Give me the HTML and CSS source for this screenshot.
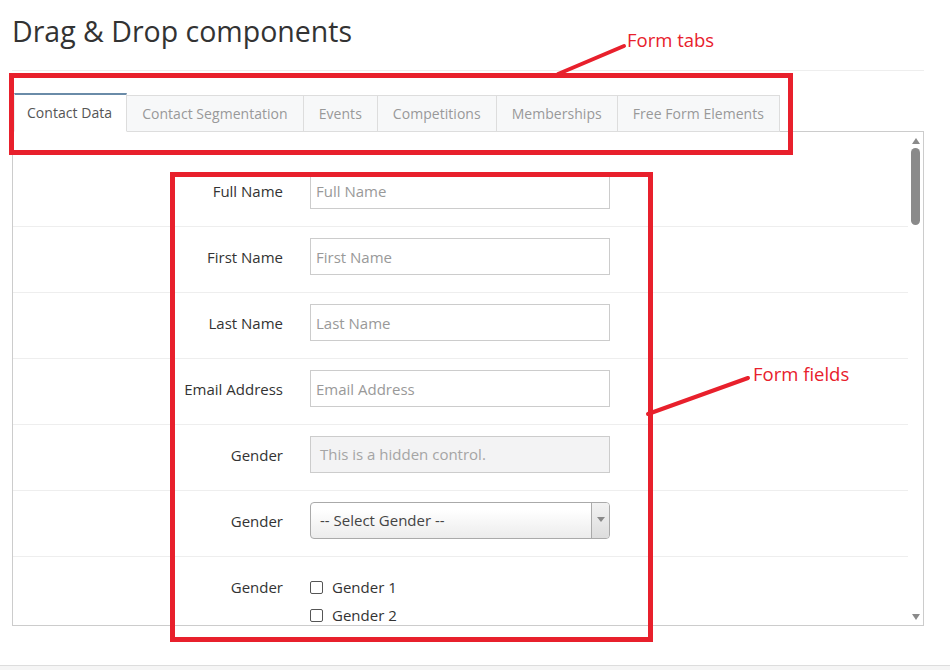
FILE: index.html
```html
<!DOCTYPE html>
<html lang="en">
<head>
<meta charset="utf-8">
<title>Drag &amp; Drop components</title>
<link rel="stylesheet" href="styles.css">
</head>
<body>
<div class="page">
  <div class="header">
    <h1 class="title">Drag &amp; Drop components</h1>
  </div>
  <div class="tabs">
    <div class="tab active">Contact Data</div>
    <div class="tab">Contact Segmentation</div>
    <div class="tab">Events</div>
    <div class="tab">Competitions</div>
    <div class="tab">Memberships</div>
    <div class="tab">Free Form Elements</div>
  </div>
  <div class="panel">
    <div class="rows">
      <div class="row">
        <div class="lbl">Full Name</div>
        <div class="ctl"><input class="inp" type="text" placeholder="Full Name"></div>
      </div>
      <div class="row">
        <div class="lbl">First Name</div>
        <div class="ctl"><input class="inp" type="text" placeholder="First Name"></div>
      </div>
      <div class="row">
        <div class="lbl">Last Name</div>
        <div class="ctl"><input class="inp" type="text" placeholder="Last Name"></div>
      </div>
      <div class="row">
        <div class="lbl">Email Address</div>
        <div class="ctl"><input class="inp" type="text" placeholder="Email Address"></div>
      </div>
      <div class="row">
        <div class="lbl">Gender</div>
        <div class="ctl"><div class="hidden-ctl">This is a hidden control.</div></div>
      </div>
      <div class="row">
        <div class="lbl">Gender</div>
        <div class="ctl">
          <div class="select">
            <span class="select-text">-- Select Gender --</span>
            <span class="select-arrow"><span class="tri-down"></span></span>
          </div>
        </div>
      </div>
      <div class="row row-checks">
        <div class="lbl lbl-top">Gender</div>
        <div class="ctl checks">
          <div class="check"><span class="box"></span>Gender 1</div>
          <div class="check"><span class="box"></span>Gender 2</div>
        </div>
      </div>
    </div>
    <div class="scrollbar">
      <span class="sb-up"></span>
      <span class="sb-thumb"></span>
      <span class="sb-space"></span>
      <span class="sb-down"></span>
    </div>
  </div>
</div>
<div class="footer"></div>

<svg class="annot" width="950" height="670" viewBox="0 0 950 670" aria-hidden="true">
  <rect x="11.5" y="75.5" width="779" height="77" fill="none" stroke="#e8202c" stroke-width="5"/>
  <rect x="172.5" y="174.5" width="478" height="465" fill="none" stroke="#e8202c" stroke-width="5"/>
  <line x1="558" y1="74" x2="624" y2="46" stroke="#e8202c" stroke-width="4" stroke-linecap="round"/>
  <line x1="648" y1="414" x2="748" y2="378" stroke="#e8202c" stroke-width="4" stroke-linecap="round"/>
</svg>
<div class="note note-tabs">Form tabs</div>
<div class="note note-fields">Form fields</div>
</body>
</html>
```
FILE: styles.css
```css
* { box-sizing: border-box; }
html, body { margin: 0; padding: 0; background: #fff; }
body {
  font-family: "Open Sans", "Noto Sans", "Liberation Sans", sans-serif;
  color: #333;
  font-size: 15px;
  width: 950px;
  height: 670px;
  overflow: hidden;
  position: relative;
}
.page {
  margin-left: 12px;
  width: 912px;
}
.header {
  padding-top: 11px;
  padding-bottom: 19px;
  border-bottom: 1px solid #eee;
}
.title {
  margin: 0;
  font-size: 28.5px;
  line-height: 40px;
  font-weight: 400;
  color: #333;
}
.tabs {
  display: flex;
  align-items: flex-end;
  margin-top: 22px;
  padding-left: 2px;
  position: relative;
  z-index: 1;
  margin-bottom: -1px;
}
.tab {
  height: 37px;
  line-height: 35px;
  padding: 0 15px;
  background: #f7f8f9;
  border: 1px solid #ddd;
  border-left: none;
  color: #999;
  font-size: 14px;
  letter-spacing: 0.04px;
  white-space: nowrap;
}
.tab.active {
  height: 39px;
  line-height: 36px;
  background: #fff;
  color: #555;
  border-top: 2px solid #6a8ba8;
  border-left: 1px solid #eee;
  border-right: 1px solid #ddd;
  border-bottom: 1px solid #fff;
  padding: 0 14px 0 12px;
}
.panel {
  display: flex;
  height: 495px;
  border: 1px solid #ccc;
  overflow: hidden;
}
.rows {
  flex: 1;
  padding-top: 29px;
  overflow: hidden;
}
.row {
  display: flex;
  align-items: center;
  height: 66px;
  padding-top: 11px;
  padding-bottom: 17px;
  border-bottom: 1px solid #eee;
}
.lbl {
  width: 270px;
  text-align: right;
  color: #333;
  font-size: 15px;
  flex: none;
}
.ctl {
  margin-left: 27px;
  width: 300px;
  flex: none;
}
.inp {
  display: block;
  width: 300px;
  height: 37px;
  border: 1px solid #ccc;
  padding: 0 5px;
  font: inherit;
  font-size: 15px;
  color: #333;
  background: #fff;
  outline: none;
}
.inp::placeholder { color: #999; opacity: 1; }
.hidden-ctl {
  height: 37px;
  line-height: 35px;
  border: 1px solid #ccc;
  background: #f3f3f4;
  color: #a5a5a5;
  padding: 0 9px;
  font-size: 15px;
}
.select {
  display: flex;
  height: 37px;
  border: 1px solid #aaa;
  border-radius: 4px;
  background: linear-gradient(#fff 20%, #ececec 100%);
  overflow: hidden;
}
.select-text {
  flex: 1;
  line-height: 35px;
  padding-left: 9px;
  color: #444;
  font-size: 15px;
}
.select-arrow {
  width: 18px;
  border-left: 1px solid #aaa;
  display: flex;
  justify-content: center;
  padding-top: 14px;
  background: linear-gradient(#f2f2f2, #ddd);
}
.tri-down {
  width: 0;
  height: 0;
  border-left: 4px solid transparent;
  border-right: 4px solid transparent;
  border-top: 5px solid #888;
}
.row-checks {
  align-items: flex-start;
  height: auto;
  padding-top: 22px;
  padding-bottom: 0;
  border-bottom: none;
}
.lbl-top { line-height: 16px; }
.checks { display: flex; flex-direction: column; gap: 12px; }
.check {
  display: flex;
  align-items: center;
  height: 16px;
  line-height: 16px;
  font-size: 15px;
  color: #333;
}
.box {
  width: 13px;
  height: 13px;
  border: 1px solid #555;
  border-radius: 2px;
  margin-right: 9px;
  background: #fff;
}
.scrollbar {
  width: 15px;
  flex: none;
  display: flex;
  flex-direction: column;
  align-items: center;
  padding-top: 6px;
  padding-bottom: 5px;
  background: #fff;
}
.sb-up {
  width: 0; height: 0;
  border-left: 4px solid transparent;
  border-right: 4px solid transparent;
  border-bottom: 6px solid #8a8a8a;
}
.sb-thumb {
  margin-top: 4px;
  width: 9px;
  height: 77px;
  border-radius: 5px;
  background: #8a8a8a;
}
.sb-space { flex: 1; }
.sb-down {
  width: 0; height: 0;
  border-left: 4px solid transparent;
  border-right: 4px solid transparent;
  border-top: 6px solid #8a8a8a;
}
.footer {
  margin-top: 39px;
  border-top: 1px solid #ddd;
  background: #f5f5f5;
  height: 10px;
}
.annot {
  position: absolute;
  left: 0;
  top: 0;
  pointer-events: none;
}
.note {
  position: absolute;
  color: #e8202c;
  font-size: 18.5px;
  line-height: 24px;
  white-space: nowrap;
}
.note-tabs { left: 627px; top: 28px; }
.note-fields { left: 753px; top: 362px; }
```
